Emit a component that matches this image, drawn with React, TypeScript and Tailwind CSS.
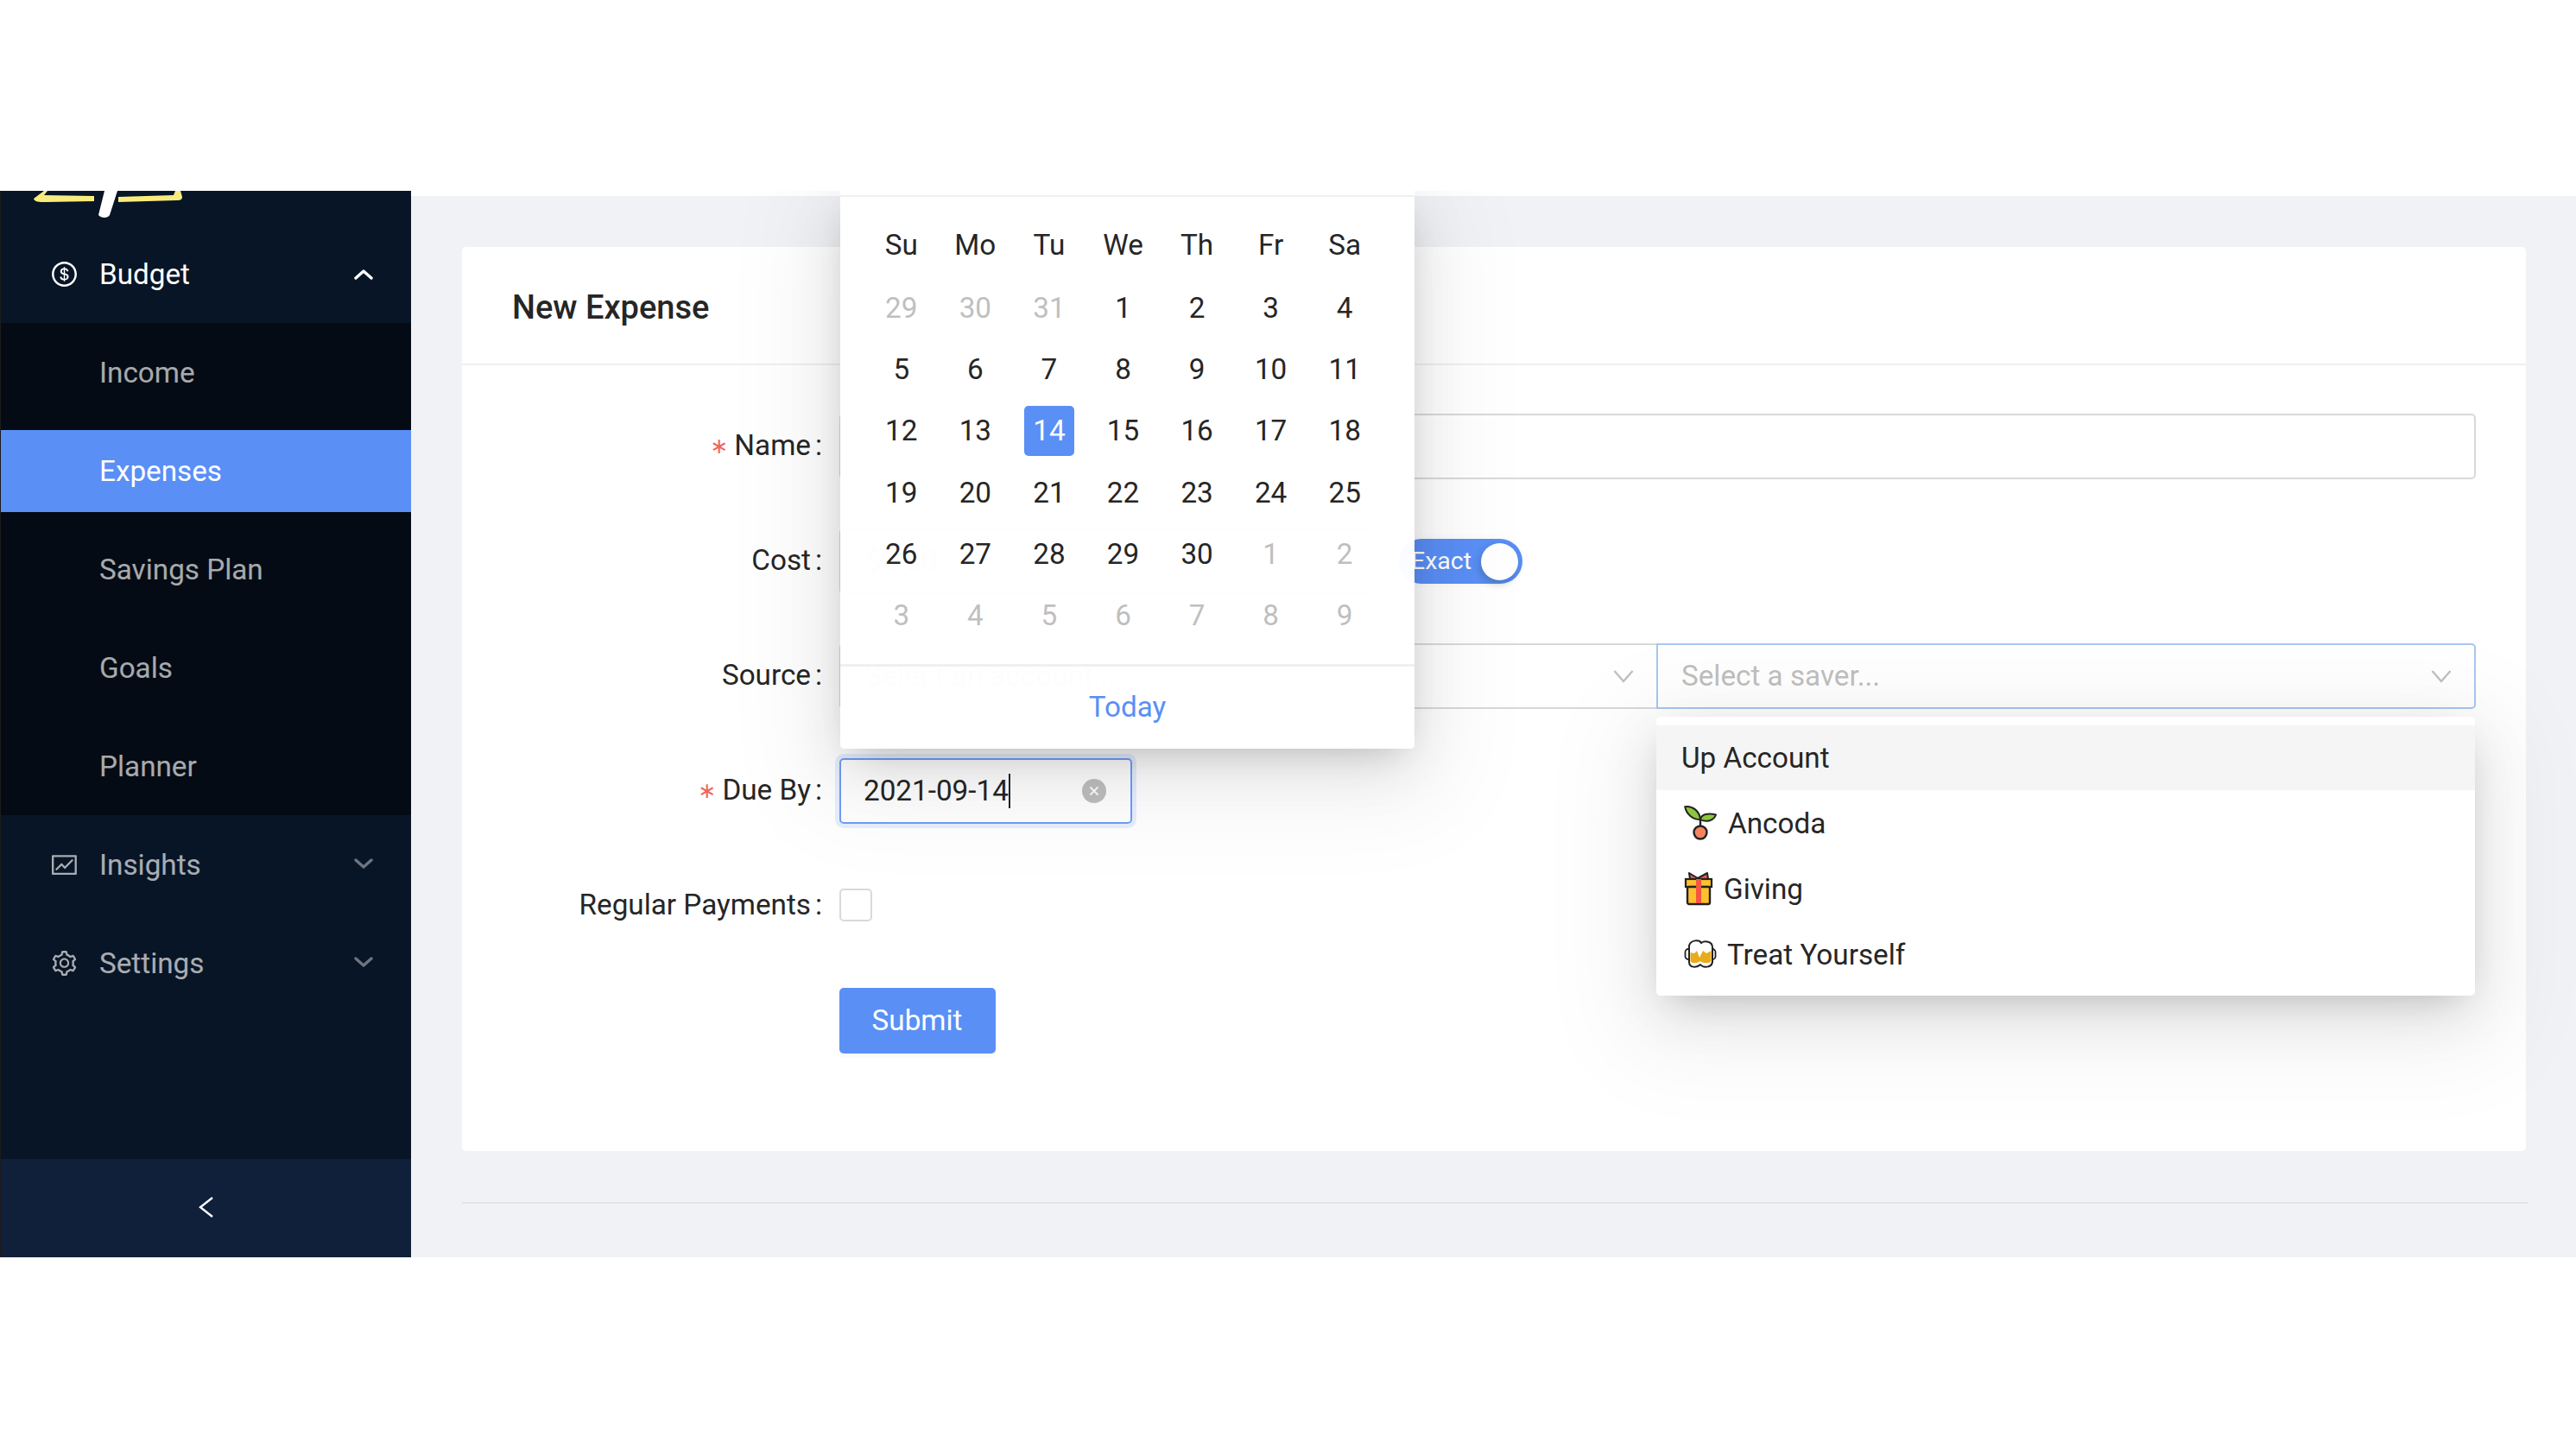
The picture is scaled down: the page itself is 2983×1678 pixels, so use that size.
import React from "react";
import { AiOutlineDollar, AiOutlineFund, AiOutlineSetting } from "react-icons/ai";

const Chevron = ({ up, color }: { up?: boolean; color: string }) => (
  <svg width="22" height="14" viewBox="0 0 22 14" className={up ? "ml-auto mr-[44px] mt-[2px]" : "ml-auto mr-[44px] -mt-[3px]"}>
    <polyline points={up ? "2,11 11,3 20,11" : "2,3 11,11 20,3"} fill="none" stroke={color} strokeWidth="3.4" strokeLinecap="round" strokeLinejoin="round" />
  </svg>
);

const SelectArrow = () => (
  <svg width="24" height="16" viewBox="0 0 24 16">
    <polyline points="1.5,2 12,14 22.5,2" fill="none" stroke="#bfbfbf" strokeWidth="2.4" />
  </svg>
);

const Logo = () => (
  <svg width="190" height="34" viewBox="0 0 190 34" className="absolute left-[30px] top-0">
    <path d="M8 9 L20 0 L24 0 L20 5 L78 6 L78 12 L22 13 C14 13 9 13 8 9Z" fill="#f9ec7d" />
    <path d="M106 7 L170 5 L172 0 L178 0 L180 7 C180 10 178 11 174 11 L106 13Z" fill="#f9ec7d" />
    <path d="M90 0 L105 0 L96 28 C94 32 86 32 83 28Z" fill="#ffffff" />
  </svg>
);

const Seedling = () => (
  <svg width="38" height="40" viewBox="0 0 38 40" className="mr-[13px]">
    <path d="M19 16 V24" stroke="#222" strokeWidth="2.4" />
    <path d="M1.2 1.2 C10 0 18 6 19 16 C10 16 3 10 1.2 1.2Z" fill="#8cc63e" stroke="#222" strokeWidth="2" strokeLinejoin="round" />
    <path d="M19 16 C20 10 28 8 37 10.5 C35 17 26 20 19 16Z" fill="#8cc63e" stroke="#222" strokeWidth="2" strokeLinejoin="round" />
    <circle cx="19" cy="31" r="7.5" fill="#f4845f" stroke="#222" strokeWidth="2.4" />
  </svg>
);

const Gift = () => (
  <svg width="34" height="40" viewBox="0 0 34 40" className="mr-[12px]">
    <path d="M7 9 L6 2 L16 8 L27 2 L28 9Z" fill="#f4563f" stroke="#222" strokeWidth="2" strokeLinejoin="round" />
    <rect x="2" y="9" width="30" height="9" fill="#ffc02d" stroke="#222" strokeWidth="2.2" />
    <rect x="4" y="18" width="26" height="20" rx="2" fill="#ffc02d" stroke="#222" strokeWidth="2.4" />
    <rect x="14" y="9" width="6" height="28" fill="#f4563f" />
  </svg>
);

const Beers = () => (
  <svg width="38" height="36" viewBox="0 0 38 36" className="mr-[12px]">
    <rect x="1.5" y="12" width="7" height="12" rx="3.5" fill="#fff" stroke="#222" strokeWidth="1.8" />
    <rect x="29.5" y="12" width="7" height="12" rx="3.5" fill="#fff" stroke="#222" strokeWidth="1.8" />
    <path d="M6 8 C8 1 18 1 20 5 C24 2 33 3 33 10 L33 27 C32 34 22 34 19 30 C15 34 6 34 6 27Z" fill="#fff" stroke="#222" strokeWidth="2" strokeLinejoin="round" />
    <path d="M7.5 16 L12 17 L15 14 L18 22 L22 14 L26 17 L31.5 14 L31.5 26 C30 29 22 29 19 26 C15 29 9 29 7.5 26Z" fill="#e9ab1d" />
  </svg>
);

const Label = ({ text, required }: { text: string; required?: boolean }) => (
  <div className="w-[437px] shrink-0 flex items-center justify-end pr-[20px] pb-[2px] text-[33.25px] text-[#262626]">
    {required && <span className="mr-[7px] text-[#f0655f] text-[25px] font-['DejaVu_Sans',sans-serif] leading-none">∗</span>}
    <span>{text}</span>
    <span className="ml-[5px]">:</span>
  </div>
);

const weeks = [
  ["29", "30", "31", "1", "2", "3", "4"],
  ["5", "6", "7", "8", "9", "10", "11"],
  ["12", "13", "14", "15", "16", "17", "18"],
  ["19", "20", "21", "22", "23", "24", "25"],
  ["26", "27", "28", "29", "30", "1", "2"],
  ["3", "4", "5", "6", "7", "8", "9"],
];

const Calendar = () => (
  <div className="absolute left-[973px] top-0 w-[665px] h-[646px] z-10 bg-white/[0.97] rounded-b-[5px] shadow-[0_14px_38px_-19px_rgba(0,0,0,0.2),0_21px_66px_0_rgba(0,0,0,0.1),0_28px_114px_38px_rgba(0,0,0,0.05)] flex flex-col text-[33.25px] text-[#262626]">
    <div className="h-[7px] border-b-2 border-[#f0f0f0]" />
    <div className="pl-[28px] pr-[38px] pt-[20px]">
      <div className="grid grid-cols-7 h-[71px] items-center text-center mb-[2px]">
        {["Su", "Mo", "Tu", "We", "Th", "Fr", "Sa"].map((d) => (
          <div key={d}>{d}</div>
        ))}
      </div>
      {weeks.map((w, i) => (
        <div key={i} className="grid grid-cols-7 h-[71.33px] items-center justify-items-center">
          {w.map((d, j) => {
            const n = Number(d);
            const muted = (i === 0 && n > 20) || (i >= 4 && n < 10);
            const sel = i === 2 && d === "14";
            return (
              <div
                key={j}
                className={
                  sel
                    ? "w-[58px] h-[58px] flex items-center justify-center rounded-[5px] bg-[#5a8ff6] text-white"
                    : muted
                    ? "w-[58px] h-[58px] flex items-center justify-center text-[#bfbfbf]"
                    : "w-[58px] h-[58px] flex items-center justify-center"
                }
              >
                {d}
              </div>
            );
          })}
        </div>
      ))}
    </div>
    <div className="mt-[20px] border-t-[3px] border-[#f0f0f0] flex-1 flex items-center justify-center pb-[2px] text-[#5a8ff6]">Today</div>
  </div>
);

const Dropdown = () => (
  <div className="absolute left-[1918px] top-[609px] w-[948px] h-[323px] z-10 bg-white rounded-[5px] py-[10px] shadow-[0_14px_38px_-19px_rgba(0,0,0,0.2),0_21px_66px_0_rgba(0,0,0,0.1),0_28px_114px_38px_rgba(0,0,0,0.05)] text-[33.25px] text-[#262626]">
    <div className="h-[75px] bg-[#f5f5f5] flex items-center pl-[29px]">Up Account</div>
    <div className="h-[76px] flex items-center pl-[32px]"><Seedling /><span className="pt-[1px]">Ancoda</span></div>
    <div className="h-[76px] flex items-center pl-[32px]"><Gift /><span className="pt-[1px]">Giving</span></div>
    <div className="h-[76px] flex items-center pl-[32px]"><Beers /><span className="pt-[1px]">Treat Yourself</span></div>
  </div>
);

const menuTop = "h-[114px] flex items-center pl-[57px] text-[33.25px]";
const subItem = "h-[95px] flex items-center pl-[114px] text-[33.25px]";

export default function App() {
  return (
    <div className="h-[1678px] w-full bg-white font-['Roboto',sans-serif] flex flex-col overflow-hidden">
      <div className="h-[221px] shrink-0" />
      <div className="relative h-[1235px] shrink-0 flex overflow-hidden">
        <aside className="w-[476px] shrink-0 border-l border-[#1c1c1c] bg-[#081526] flex flex-col">
          <div className="relative h-[39px] shrink-0 z-10">
            <Logo />
          </div>
          <div className={menuTop + " text-white"}>
            <AiOutlineDollar size={33} className="mr-[24px]" />
            <span className="pt-[2px]">Budget</span>
            <Chevron up color="#ffffff" />
          </div>
          <div className="h-[570px] bg-[#040b14] pt-[10px] flex flex-col gap-[19px] text-white/65">
            <div className={subItem}>Income</div>
            <div className={subItem + " bg-[#5a8ff6] text-white"}>Expenses</div>
            <div className={subItem}>Savings Plan</div>
            <div className={subItem}>Goals</div>
            <div className={subItem}>Planner</div>
          </div>
          <div className={menuTop + " text-white/65"}>
            <AiOutlineFund size={33} className="mr-[24px]" />
            <span className="pt-[1px]">Insights</span>
            <Chevron color="#6d7480" />
          </div>
          <div className={menuTop + " text-white/65"}>
            <AiOutlineSetting size={33} className="mr-[24px]" />
            <span className="pt-[1px]">Settings</span>
            <Chevron color="#6d7480" />
          </div>
          <div className="flex-1" />
          <div className="h-[114px] bg-[#10203a] flex items-center justify-center pb-[2px]">
            <svg width="18" height="26" viewBox="0 0 18 26">
              <polyline points="16,2 2,13 16,24" fill="none" stroke="#ffffff" strokeWidth="2.4" />
            </svg>
          </div>
        </aside>

        <main className="flex-1 min-w-0 pt-[6px] bg-white flex flex-col">
          <div className="flex-1 bg-[#f0f2f5] pl-[59px] pr-[58px] pt-[59px]">
            <section className="h-[1047px] bg-white rounded-[5px]">
              <header className="h-[137px] border-b-2 border-[#f0f0f0] flex items-center pl-[58px] pt-[5px] text-[38px] font-medium text-[#262626]">
                New Expense
              </header>
              <div className="pt-[56px] pr-[58px] flex flex-col gap-[57px]">
                <div className="h-[76px] flex items-center">
                  <Label text="Name" required />
                  <div className="flex-1 h-[76px] border-2 border-[#d9d9d9] rounded-[5px]" />
                </div>
                <div className="h-[76px] flex items-center">
                  <Label text="Cost" />
                  <div className="w-[620px] h-[76px] border-2 border-[#d9d9d9] rounded-[5px] flex items-center pl-[28px] text-[#bfbfbf] text-[33.25px]">$0.00</div>
                  <div className="ml-[28px] w-[143px] h-[52px] rounded-full bg-[#5a8ff6] flex items-center justify-between pl-[14px] pr-[5px] text-white text-[28.5px] shadow-[0_0_10px_rgba(0,0,0,0.04)]">
                    <span>Exact</span>
                    <span className="w-[43px] h-[43px] rounded-full bg-white shadow-[-2px_4px_8px_rgba(0,35,11,0.2)]" />
                  </div>
                </div>
                <div className="h-[76px] flex items-center">
                  <Label text="Source" />
                  <div className="w-[946px] h-[76px] border-y-2 border-l-2 border-[#d9d9d9] rounded-l-[5px] flex items-center justify-between pl-[28px] pr-[26px] text-[#bfbfbf] text-[33.25px]">
                    <span>Select an account...</span>
                    <SelectArrow />
                  </div>
                  <div className="flex-1 h-[76px] border-2 border-[#a8c7ee] rounded-r-[5px] flex items-center justify-between pl-[27px] pb-[1px] pr-[26px] text-[#bfbfbf] text-[33.25px]">
                    <span>Select a saver...</span>
                    <SelectArrow />
                  </div>
                </div>
                <div className="h-[76px] flex items-center">
                  <Label text="Due By" required />
                  <div className="w-[339px] h-[76px] border-2 border-[#6f9ff5] rounded-[5px] shadow-[0_0_0_5px_rgba(91,143,249,0.15)] flex items-center pl-[26px] pr-[28px] text-[33.25px] text-[#262626] bg-transparent">
                    <span className="-mt-[1px]">2021-09-14</span>
                    <span className="w-[2px] h-[40px] bg-[#262626]" />
                    <span className="ml-auto w-[28px] h-[28px] rounded-full bg-[#bfbfbf] flex items-center justify-center">
                      <svg width="12" height="12" viewBox="0 0 12 12">
                        <path d="M1.5 1.5 L10.5 10.5 M10.5 1.5 L1.5 10.5" stroke="#ffffff" strokeWidth="1.8" />
                      </svg>
                    </span>
                  </div>
                </div>
                <div className="h-[76px] flex items-center">
                  <Label text="Regular Payments" />
                  <div className="w-[38px] h-[38px] -mt-[2px] border-2 border-[#d9d9d9] rounded-[5px]" />
                </div>
                <div className="h-[76px] flex items-center pl-[437px]">
                  <div className="w-[181px] h-[76px] rounded-[5px] bg-[#5a8ff6] text-white text-[33.25px] flex items-center justify-center pb-[1px] pr-[1px] shadow-[0_5px_0_rgba(0,0,0,0.02)]">
                    Submit
                  </div>
                </div>
              </div>
            </section>
            <div className="mt-[59px] -mr-[2px] h-[2px] bg-[#e3e4e9]" />
          </div>
        </main>

        <Calendar />
        <Dropdown />
      </div>
    </div>
  );
}
